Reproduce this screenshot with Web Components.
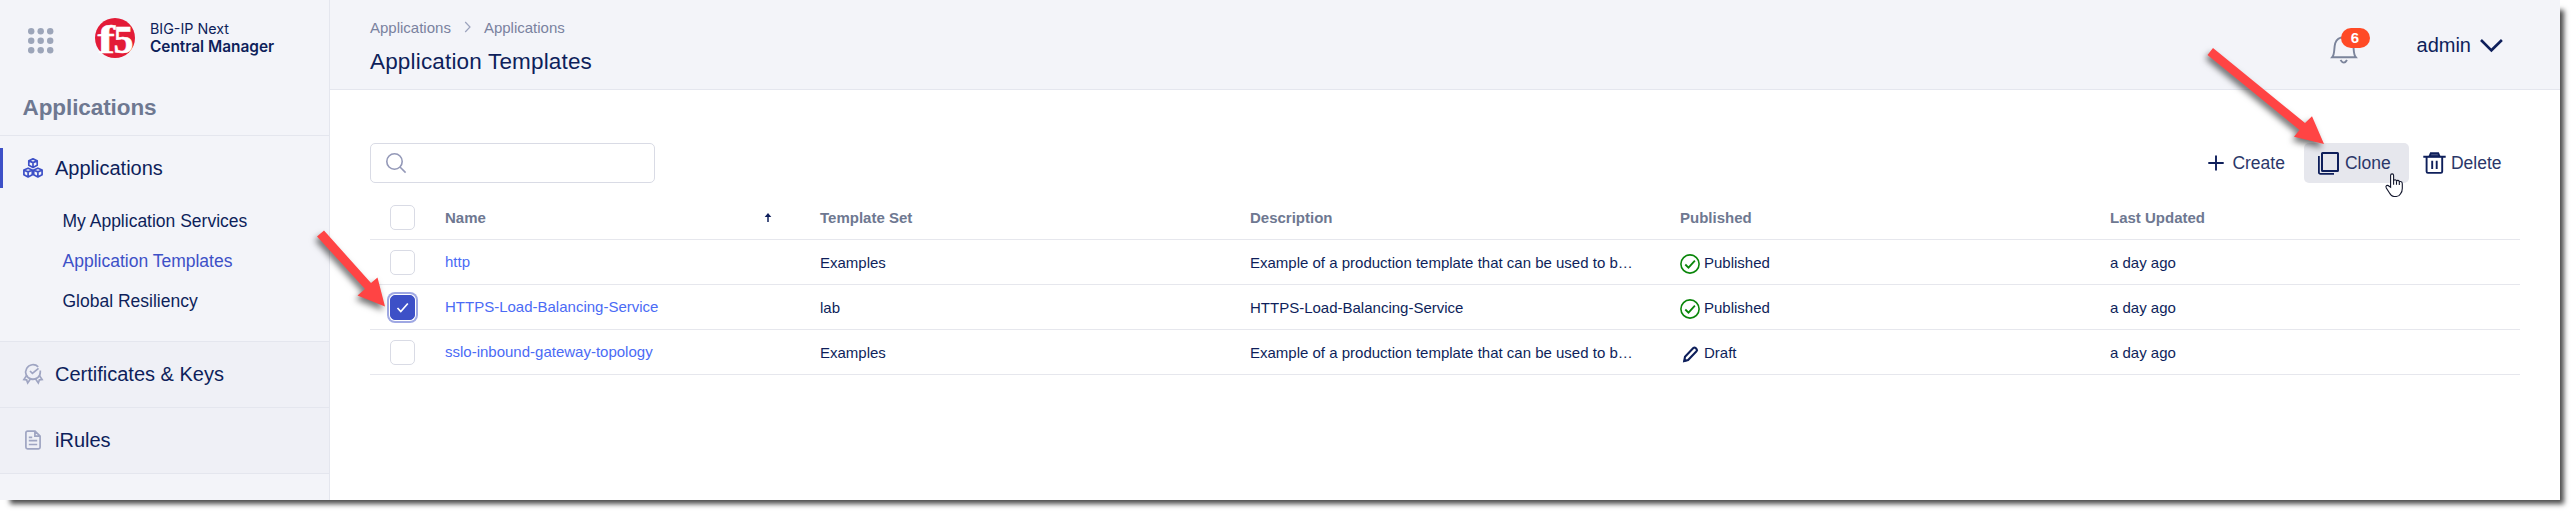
<!DOCTYPE html>
<html lang="en">
<head>
<meta charset="utf-8">
<title>BIG-IP Next Central Manager</title>
<style>
html,body{margin:0;background:#fff}
body{font-family:"Liberation Sans",Arial,sans-serif;color:#0e1f5b;width:2575px;height:515px;overflow:hidden}
</style>
</head>
<body>
<cm-app></cm-app>
<script>
const define = (name, html, setup) => {
  const t = document.createElement('template');
  t.innerHTML = html;
  customElements.define(name, class extends HTMLElement {
    constructor() {
      super();
      this.attachShadow({mode: 'open'}).append(t.content.cloneNode(true));
    }
    connectedCallback() { if (setup) setup(this, this.shadowRoot); }
  });
};

const icons = {
  cubes: ['0 0 20 20', '<g fill="none" stroke="#3d50c7" stroke-width="1.7" stroke-linejoin="round"><path d="M10 .9l4.2 1.8v4.600L10 9.400 5.800 7.300V2.700zM6 2.900l4 1.700 4-1.700M10 4.600v4.600"/><path d="M5.100 10.200l4.200 1.800v4.800l-4.200 2.200-4.200-2.200V12zM1.100 12.200l4 1.700 4-1.700M5.100 13.900v4.800M14.900 10.200l4.200 1.800v4.800l-4.200 2.200-4.200-2.200V12zM10.900 12.200l4 1.700 4-1.700M14.900 13.900v4.800"/></g>'],
  cert: ['0 0 20 20', '<g fill="none" stroke="#9fa5c2" stroke-width="1.7"><path d="M15.200 2.900A7.300 7.300 0 1 0 17.300 8V6.500M5.500 13.700q4.500 3 9 0"/><path d="M7 7l2.400 2.400L15.500 4.300"/><path d="M3.800 11.200L.9 15.600l2.700.3 1.100 3.100 3.200-4.700M16.200 11.200l2.900 4.400-2.700.3-1.100 3.100-3.200-4.700"/></g>'],
  doc: ['0 0 20 20', '<g fill="none" stroke="#9fa5c2" stroke-width="1.700"><path d="M12 1.200H4.500a1.600 1.600 0 0 0-1.600 1.600v14.400a1.600 1.600 0 0 0 1.600 1.600h11a1.600 1.600 0 0 0 1.600-1.600V6.200zM11.900 1.200v5h5.200M5.800 7.300h3.400M5.800 10.700h8.400M5.800 14.500h8.400"/></g>'],
  search: ['0 0 20 20', '<g fill="none" stroke="#9499b8" stroke-width="1.600"><circle cx="8.500" cy="8.500" r="7.700"/><path d="M14 14l5.600 5.600"/></g>'],
  ok: ['0 0 20 20', '<g fill="none" stroke="#0a860a" stroke-width="1.600"><circle cx="10" cy="10" r="9.100"/><path stroke-width="1.800" d="M5.300 10.500l3.200 3.200 6.400-7"/></g>'],
  pen: ['0 0 20 20', '<path d="M4.200 17.100l.8-4.400 8.300-8.600q1.200-1.100 2.300 0l.9.900q1.100 1.200 0 2.300L8.100 16z" fill="none" stroke="#0e1f5b" stroke-width="2.100"/><path d="M3.400 18l.8-4 3 3z" fill="#0e1f5b"/>'],
  plus: ['0 0 16 16', '<path d="M8 .5v15M.3 8h15.400" stroke="#0e1f5b" stroke-width="1.900"/>'],
  clone: ['0 0 21 23', '<g fill="none" stroke="#0e1f5b" stroke-width="2"><rect x="4" y="1" width="16" height="18" rx=".5"/><path stroke-width="1.800" d="M.9 4v16.400a1.500 1.500 0 0 0 1.500 1.500H16"/></g>'],
  trash: ['0 0 23 22', '<g fill="none" stroke="#0e1f5b" stroke-width="1.900"><path d="M.3 4.800h22.400M3.600 5v14.600q0 1.300 1.300 1.300h13q1.300 0 1.300-1.300V5M9.200 8.700v8.300M13.700 8.700v8.300"/><path fill="#56618b" d="M6.500 4.300L7.800 1.200h7.400l1.300 3.100z"/></g>'],
  chevron: ['0 0 23 13', '<path d="M1 1l10.400 10.300L21.900 1" fill="none" stroke="#0e1f5b" stroke-width="2.600"/>'],
  crumb: ['0 0 8 12', '<path d="M1.200 1l4.800 5-4.800 5" fill="none" stroke="#9ca3bd" stroke-width="1.200"/>'],
  bell: ['0 0 26 28', '<g fill="none" stroke="#7b849b" stroke-width="1.900"><path d="M1.200 21.200C4 18 2.700 13 4.200 7.300 5.700 2.500 9 1.200 13 1.200s7.300 1.300 8.800 6.100c1.500 5.700.2 10.700 3 13.900z"/><path d="M9.500 24q3.500 5.200 6.500 0"/></g>'],
  sort: ['0 0 8 10', '<path d="M4 0L7.300 4H.7z" fill="#0e1f5b"/><path d="M4 2v7" stroke="#0e1f5b" stroke-width="1.500"/>'],
  grid: ['0 0 26 26', [3.200,12.700,22.200].map(y=>[3.200,12.700,22.200].map(x=>`<circle cx="${x}" cy="${y}" r="3.200" fill="#9ca5b9"/>`).join('')).join('')],
  hand: ['0 0 19 25', '<path d="M5.600 14.200V2.600q0-1.700 1.500-1.700t1.500 1.700V8q.3-1.300 1.500-1.200t1.400 1.500q.3-1 1.500-.9t1.300 1.600q.3-.7 1.400-.5 1.600.2 1.600 2.200v4.500q0 3.500-1.700 5.500Q14 23.500 11.300 23.500H9q-2.800-.3-4.500-3.500L1.300 15q-.9-1.900.3-2.500 1.300-.6 2.600.8z" fill="#fff" stroke="#11152b" stroke-width="1.100"/><path d="M8.600 7.500v4.300M11.500 8.300v3.500M14.300 9v3" stroke="#11152b" stroke-width="1.100"/>']
};
define('cm-icon', `<style>:host{display:block;flex:none}svg{display:block;width:100%;height:100%;overflow:visible}</style><svg></svg>`,
  (el, r) => {
    const [box, body] = icons[el.getAttribute('name')], [, , w, h] = box.split(' ');
    const svg = r.querySelector('svg');
    svg.setAttribute('viewBox', box);
    svg.innerHTML = body;
    el.style.width = w + 'px';
    el.style.height = h + 'px';
  });

define('cm-logo', `<style>
:host{display:flex;align-items:center;height:40px;font-family:Inter,sans-serif}
.ball{width:40px;height:40px;display:block;margin-right:15px;overflow:visible}
.n{font-size:14.300px;line-height:18px;white-space:nowrap}
.n b{display:block;font-weight:600;font-size:15.400px}
.n span{display:block}
</style>
<svg class="ball" viewBox="0 0 40 40"><circle cx="20" cy="20" r="20" fill="#e31b37"/><g fill="#fff" stroke="#fff" stroke-width=".5" font-family="Liberation Serif" font-weight="700"><text x="2.500" y="34.500" font-size="41" textLength="17.500" lengthAdjust="spacingAndGlyphs">f</text><text x="18.500" y="34.500" font-size="40" textLength="20" lengthAdjust="spacingAndGlyphs">5</text></g></svg>
<div class="n"><span>BIG-IP Next</span><b>Central Manager</b></div>`);

define('cm-nav-item', `<style>
:host{display:block;box-sizing:border-box;height:66px;border-bottom:1px solid #e4e6ee;background:#eff0f6;padding-top:12px}
:host([active]){height:206px;background:#f3f4f9}
.r{display:flex;align-items:center;height:40px;padding-left:20px;border-left:3px solid transparent;font-size:20px}
:host([active]) .r{border-color:#3d50c7}
cm-icon{margin-right:12px}
</style><div class="r"><span><slot></slot></span></div><slot name="sub"></slot>`,
  (el, r) => {
    const icon = document.createElement('cm-icon');
    icon.setAttribute('name', el.getAttribute('icon'));
    r.querySelector('.r').prepend(icon);
  });
define('cm-nav-link', `<style>
:host{display:flex;align-items:center;height:40px;padding-left:62.500px;font-size:17.500px}
:host(:first-of-type){margin-top:13px}
:host([active]){color:#3d50c7}
</style><slot></slot>`);

define('cm-sidebar', `<style>
:host{display:block;box-sizing:border-box;width:330px;height:500px;background:#f3f4f9;border-right:1px solid #e4e6ee}
.top{display:flex;align-items:flex-start;padding:18px 0 0 28px;height:71px}
.top>cm-icon{margin:10px 41px 0 0}
h2{margin:0;font-size:22.500px;letter-spacing:-.08px;line-height:26px;height:47px;box-sizing:border-box;padding:6px 0 0 22.500px;color:#6e7891;border-bottom:1px solid #e4e6ee}
</style>
<div class="top"><cm-icon name="grid"></cm-icon><cm-logo></cm-logo></div>
<h2>Applications</h2>
<cm-nav-item icon="cubes" active>Applications
<cm-nav-link slot="sub">My Application Services</cm-nav-link><cm-nav-link slot="sub" active>Application Templates</cm-nav-link><cm-nav-link slot="sub">Global Resiliency</cm-nav-link></cm-nav-item>
<cm-nav-item icon="cert">Certificates &amp; Keys</cm-nav-item>
<cm-nav-item icon="doc">iRules</cm-nav-item>`);

define('cm-header', `<style>
:host{display:flex;justify-content:space-between;box-sizing:border-box;height:90px;background:#f3f4f9;border-bottom:1px solid #e4e6ee;padding:0 57px 0 40px}
.bc{display:flex;align-items:center;margin-top:18px;height:18px;font-size:15px;color:#7a829f}
.bc cm-icon{margin:0 12px 0 13px}
h1{margin:12px 0 0;font-weight:400;font-size:22.500px;letter-spacing:.17px;line-height:28px}
.u{display:flex;align-items:flex-start}
.bell{position:relative;margin:36px 60px 0 0}
.badge{position:absolute;left:10px;top:-8px;width:29px;height:20px;border-radius:10px;background:#ff4a26;color:#fff;font-weight:700;font-size:15px;line-height:20px;text-align:center}
.ad{font-size:20px;line-height:24px;margin:33px 9px 0 0}
.ch{margin-top:39px}
</style>
<div><div class="bc"><span>Applications</span><cm-icon name="crumb"></cm-icon><span>Applications</span></div><h1>Application Templates</h1></div>
<div class="u"><div class="bell"><cm-icon name="bell"></cm-icon><div class="badge">6</div></div><div class="ad">admin</div><cm-icon class="ch" name="chevron"></cm-icon></div>`);

define('cm-search', `<style>
:host{display:flex;align-items:center;box-sizing:border-box;width:285px;height:40px;border:1px solid #d9dbe5;border-radius:5px;padding-left:15px;background:#fff}
</style><cm-icon name="search"></cm-icon>`);

define('cm-action', `<style>
:host{display:flex;align-items:center;box-sizing:border-box;height:40px;border-radius:5px;font-size:17.500px;color:#2b3769}
:host([hover]){background:#e6e7ed}
</style><slot name="icon"></slot><slot></slot>`);

define('cm-check', `<style>
:host{display:block;box-sizing:border-box;width:25px;height:25px;border:1px solid #d9dbe5;border-radius:5px;background:#fff}
:host([on]){background:#3d50c7;border-color:#3d50c7;box-shadow:0 0 0 1px #fff,0 0 0 3px #9fa8e3}
svg{display:none}:host([on]) svg{display:block}
</style><svg width="23" height="23" viewBox="0 0 23 23"><path d="M6.500 12l3.300 3.500 7-8" fill="none" stroke="#fff" stroke-width="1.700"/></svg>`);

define('cm-row', `<style>
:host{display:grid;grid-template-columns:75px 375px 430px 430px 430px 410px;align-items:center;box-sizing:border-box;height:45px;border-bottom:1px solid #e6e7ed;font-size:15px;line-height:18px}
:host([head]){font-weight:700;color:#6e7891}
::slotted(cm-check){margin-left:20px;margin-top:1px}
::slotted(a){color:#4b6bf5}
::slotted(span){padding-top:2px}
::slotted(.st){display:flex;align-items:center;gap:4px}
::slotted(.nm){display:flex;justify-content:space-between;align-items:center;padding-right:48px}
</style><slot></slot>`);

define('cm-table', `<style>
:host{display:block;margin-top:12px}
.st cm-icon{margin-top:2px}
</style>
<cm-row head><cm-check></cm-check><span class="nm">Name<cm-icon name="sort"></cm-icon></span><span>Template Set</span><span>Description</span><span>Published</span><span>Last Updated</span></cm-row>
<cm-row><cm-check></cm-check><a>http</a><span>Examples</span><span>Example of a production template that can be used to b…</span><span class="st"><cm-icon name="ok"></cm-icon>Published</span><span>a day ago</span></cm-row>
<cm-row><cm-check on></cm-check><a>HTTPS-Load-Balancing-Service</a><span>lab</span><span>HTTPS-Load-Balancing-Service</span><span class="st"><cm-icon name="ok"></cm-icon>Published</span><span>a day ago</span></cm-row>
<cm-row><cm-check></cm-check><a>sslo-inbound-gateway-topology</a><span>Examples</span><span>Example of a production template that can be used to b…</span><span class="st"><cm-icon name="pen"></cm-icon>Draft</span><span>a day ago</span></cm-row>`);

define('cm-annotations', `<style>
:host{position:absolute;left:0;top:0;width:2575px;height:515px;pointer-events:none}
svg{position:absolute;left:0;top:0}
cm-icon{position:absolute;left:2385px;top:173px}
</style>
<svg width="2575" height="515" style="filter:drop-shadow(-2px 4px 3px rgba(0,0,0,.55))"><g fill="#ff4444"><path d="M2213 48L2305 123 2312 116.300 2324 144 2294 136.700 2299.500 130 2207.500 55z"/><path d="M324 230.500L371 283 377.500 277.500 385 306.500 357.500 295.500 365 289 317 236.500z"/></g></svg>
<cm-icon name="hand"></cm-icon>`);

define('cm-app', `<style>
:host{display:block;position:relative;width:2575px;height:515px;background:#fff}
.w{display:grid;grid-template-columns:330px 2230px;width:2560px;height:500px;background:#fff;box-shadow:7px 7px 5px -3px rgba(0,0,0,.7)}
.b{padding:53px 40px 0}
.tb{display:flex;justify-content:space-between}
.ac{display:flex;padding-right:18.500px}
.i1{margin-right:8px}.i2{margin:0 6px 0 14px}.i3{margin-right:5px}
.a1{margin-right:19px}.a2{width:105px;margin-right:14px}
</style>
<div class="w"><cm-sidebar></cm-sidebar><main><cm-header></cm-header>
<div class="b"><div class="tb"><cm-search></cm-search><div class="ac"><cm-action class="a1"><cm-icon class="i1" slot="icon" name="plus"></cm-icon>Create</cm-action><cm-action class="a2" hover><cm-icon class="i2" slot="icon" name="clone"></cm-icon>Clone</cm-action><cm-action><cm-icon class="i3" slot="icon" name="trash"></cm-icon>Delete</cm-action></div></div>
<cm-table></cm-table></div></main></div>
<cm-annotations></cm-annotations>`);
</script>
</body>
</html>
